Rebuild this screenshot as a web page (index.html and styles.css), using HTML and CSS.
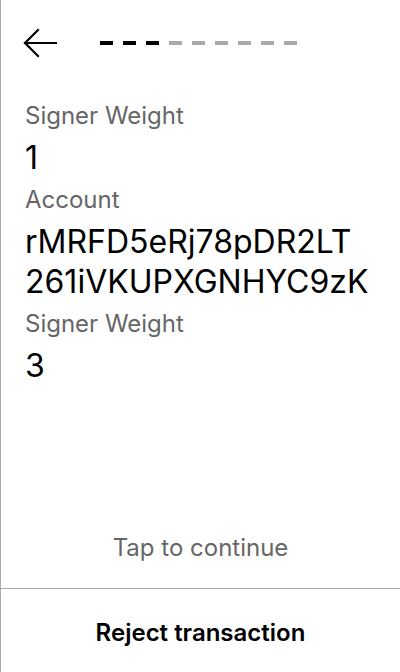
FILE: index.html
```html
<!DOCTYPE html>
<html>
<head>
<meta charset="utf-8">
<link rel="stylesheet" href="styles.css">
</head>
<body>
<div class="screen">
  <header class="header">
    <button class="back" aria-label="Back">
      <svg width="34" height="30" viewBox="0 0 34 30">
        <path d="M33 15 H2 M15 2 L2 15 L15 28" fill="none" stroke="#000" stroke-width="2.2" stroke-linecap="square"/>
      </svg>
    </button>
    <div class="steps">
      <span class="step done"></span><span class="step done"></span><span class="step done"></span><span class="step"></span><span class="step"></span><span class="step"></span><span class="step"></span><span class="step"></span><span class="step"></span>
    </div>
  </header>
  <main class="fields">
    <div class="label">Signer Weight</div>
    <div class="value">1</div>
    <div class="label">Account</div>
    <div class="value">rMRFD5eRj78pDR2LT<br>261iVKUPXGNHYC9zK</div>
    <div class="label">Signer Weight</div>
    <div class="value">3</div>
  </main>
  <div class="tap">Tap to continue</div>
  <footer class="footer">
    <button class="reject">Reject transaction</button>
  </footer>
</div>
</body>
</html>
```
FILE: styles.css
```css
html, body {
  margin: 0;
  padding: 0;
  background: #fff;
}
body {
  font-family: Inter, "Noto Sans", sans-serif;
  color: #000;
}
.screen {
  width: 400px;
  height: 672px;
  box-sizing: border-box;
  border-left: 1px solid #aaa;
  display: flex;
  flex-direction: column;
}
.header {
  display: flex;
  align-items: center;
  height: 86px;
  padding-left: 22px;
  flex-shrink: 0;
}
.back {
  border: 0;
  background: none;
  padding: 0;
  width: 34px;
  height: 30px;
  display: flex;
}
.steps {
  display: flex;
  gap: 10px;
  margin-left: 43px;
}
.step {
  width: 13px;
  height: 4px;
  background: #aaa;
}
.step.done {
  background: #000;
}
.fields {
  flex: 1;
  padding: 14px 24px 0;
  display: flex;
  flex-direction: column;
  gap: 6px;
}
.label {
  font-size: 24px;
  line-height: 32px;
  color: #666;
}
.value {
  font-size: 32px;
  line-height: 40px;
  color: #000;
}
.tap {
  text-align: center;
  font-size: 24px;
  line-height: 32px;
  color: #666;
  padding-bottom: 24px;
}
.footer {
  border-top: 1px solid #aaa;
  height: 83px;
  flex-shrink: 0;
  display: flex;
}
.reject {
  flex: 1;
  border: 0;
  background: none;
  padding: 3px 0 0;
  font-family: Inter, "Noto Sans", sans-serif;
  font-size: 24px;
  font-weight: 600;
  color: #000;
}
```
